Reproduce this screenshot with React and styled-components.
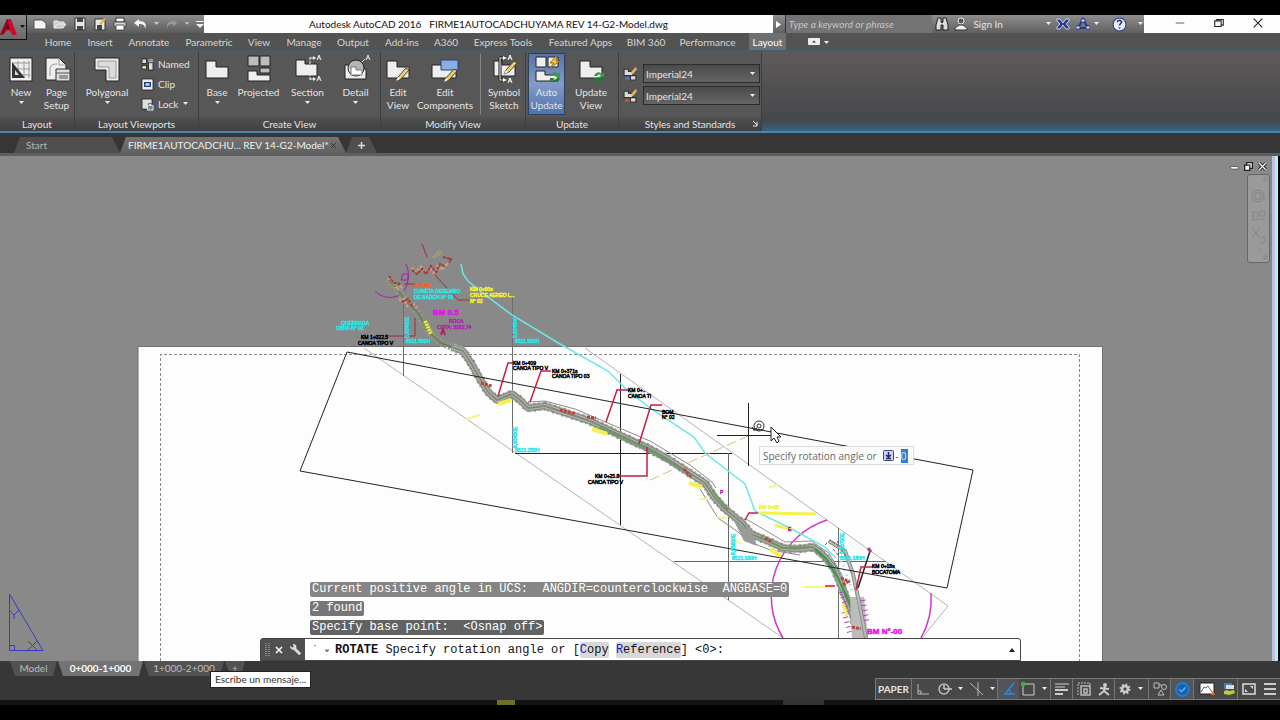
import React from "react";
import styled, { createGlobalStyle } from "styled-components";

const GlobalStyle = createGlobalStyle`
  * {
    box-sizing: border-box;
  }
  body {
    margin: 0;
    background: #000;
    font-family: Lato, "Open Sans", sans-serif;
    font-size: 10px;
    color: #e4e4e4;
  }
  button,
  input,
  select {
    font: inherit;
    color: inherit;
    margin: 0;
    padding: 0;
    border: 0;
    background: none;
  }
`;

const Page = styled.div`
  display: flex;
  flex-direction: column;
  min-height: 100vh;
  padding: 15px 0;
`;

/* ---------- title bar ---------- */

const Header = styled.header`
  display: grid;
  grid-template-columns: 27px 1fr;
  grid-template-rows: 18px 17px;
  background: #535353;
`;

const AppButton = styled.button`
  grid-row: 1 / 3;
  height: 25px;
  display: flex;
  align-items: center;
  justify-content: center;
  gap: 2px;
  background: linear-gradient(#8c8c8c, #6a6a6a);
  border-right: 1px solid #111;
  border-bottom: 1px solid #111;
`;

const TitleBar = styled.div`
  display: flex;
  background: #fdfdfd;
`;

const QuickAccess = styled.div`
  display: flex;
  align-items: center;
  gap: 6px;
  width: 177px;
  padding-left: 6px;
  background: linear-gradient(#8e8e8e, #5c5c5c);
`;

const IconButton = styled.button`
  display: flex;
  align-items: center;
  justify-content: center;
  width: ${(p) => p.$w || 14}px;
  height: 16px;
`;

const Title = styled.div`
  flex: 1;
  display: flex;
  justify-content: center;
  gap: 8px;
  line-height: 18px;
  white-space: pre;
  color: #111;
`;

const InfoCenter = styled.div`
  display: flex;
  align-items: center;
  width: 371px;
  background: linear-gradient(#8e8e8e, #606060);
`;

const SearchInput = styled.input`
  width: 149px;
  height: 18px;
  margin-right: 3px;
  padding-left: 3px;
  font-style: italic;
  background: #737373;
  border-left: 1px solid #333;

  &::placeholder {
    color: #c6c6c6;
    opacity: 1;
  }
`;

const SignIn = styled.button`
  width: 72px;
  text-align: left;
`;

const WindowButtons = styled.div`
  display: flex;
  width: 136px;
  padding: 0 7px 0 21px;
  justify-content: space-between;
  color: #222;
`;

const MenuTabs = styled.nav`
  display: flex;
  align-items: center;
  padding-left: 10px;
`;

const MenuTab = styled.button`
  width: ${(p) => p.$w}px;
  height: 17px;
  margin-left: ${(p) => (p.$active ? 8 : 0)}px;
  line-height: 19px;
  white-space: nowrap;
  color: ${(p) => (p.$active ? "#fff" : "#d6d6d6")};
  background: ${(p) => (p.$active ? "#6d7073" : "none")};
`;

/* ---------- ribbon ---------- */

const Ribbon = styled.div`
  display: flex;
  height: 83px;
  border-top: 2px solid #3f5f72;
  border-bottom: 2px solid #4b86ad;
  background: linear-gradient(#5e5a59, #4c4c4e 65%, #44484c 88%, #356587);
`;

const Panel = styled.section`
  display: flex;
  flex-direction: column;
  width: ${(p) => p.$w}px;
  border-right: 1px solid #3a3f43;
  background: #575757;
`;

const PanelBody = styled.div`
  flex: 1;
  display: flex;
  align-items: flex-start;
  padding: 2px 0 0 ${(p) => p.$left || 1}px;
`;

const PanelTitle = styled.div`
  position: relative;
  height: 14px;
  line-height: 14px;
  text-align: center;
  background: linear-gradient(#515151, #3d3f42);
`;

const Launcher = styled.button`
  position: absolute;
  right: 3px;
  top: 3px;
  display: flex;
`;

const BigButton = styled.button`
  display: flex;
  flex-direction: column;
  align-items: center;
  width: ${(p) => p.$w}px;
  height: 60px;
  line-height: 13px;
  white-space: nowrap;
  background: ${(p) =>
    p.$on ? "linear-gradient(#5575a8, #839bc8 50%, #4f73ad)" : "none"};
  outline: ${(p) => (p.$on ? "1px solid #2f3f5a" : "none")};

  svg {
    flex: none;
    margin-bottom: 1px;
  }
  svg + svg {
    margin-top: 2px;
  }
`;

const Divider = styled.div`
  width: 1px;
  height: 60px;
  margin: 0 3px 0 4px;
  background: #858585;
`;

const SmallList = styled.div`
  display: flex;
  flex-direction: column;
  margin-left: 6px;
`;

const SmallButton = styled.button`
  display: flex;
  align-items: center;
  gap: 4px;
  height: 20px;
`;

const StyleList = styled.div`
  display: flex;
  flex-direction: column;
  gap: 3px;
  padding-top: 10px;
`;

const StyleRow = styled.label`
  display: flex;
  align-items: center;
  gap: 5px;
`;

const SelectBox = styled.span`
  display: flex;
  align-items: center;
  width: 117px;
  height: 19px;
  padding-right: 3px;
  border: 1px solid #2c2c2c;
  background: linear-gradient(#4a4a4a, #656565);

  select {
    flex: 1;
    height: 17px;
    padding-left: 2px;
    appearance: none;
  }
`;

/* ---------- file tabs ---------- */

const FileTabs = styled.div`
  display: flex;
  align-items: flex-end;
  height: 23px;
  padding-left: 14px;
  background: #363636;
  border-bottom: 3px solid #5e5e5e;
`;

const FileTab = styled.button`
  display: flex;
  align-items: center;
  justify-content: space-between;
  width: ${(p) => p.$w}px;
  height: 16px;
  padding: 0 ${(p) => (p.$active ? "9px 0 8px" : "12px")};
  white-space: nowrap;
  color: ${(p) => (p.$active ? "#f0f0f0" : "#b4b4b4")};
  background: ${(p) =>
    p.$active ? "linear-gradient(#757575, #616161)" : "#4f4f4f"};
  clip-path: polygon(6px 0, calc(100% - 8px) 0, 100% 100%, 0 100%);
`;

/* ---------- drawing area ---------- */

const Workspace = styled.main`
  position: relative;
  flex: 1;
  min-height: 505px;
  background: #898989;
  border-right: 2px solid #000;
`;

const EdgeGlow = styled.div`
  position: absolute;
  top: 0;
  right: 0;
  bottom: 0;
  width: 6px;
  background: linear-gradient(90deg, #bfc0dc 50%, #a9f4f2 50%);
`;

const Drawing = styled.svg`
  position: absolute;
  top: 0;
  left: 0;
  width: calc(100% - 6px);
  height: 100%;
`;

const DocButtons = styled.div`
  position: absolute;
  top: 5px;
  right: 9px;
  display: flex;
  gap: 1px;

  button {
    width: 13px;
    height: 11px;
  }
`;

const NavBar = styled.div`
  position: absolute;
  top: 18px;
  right: 8px;
  width: 23px;
  height: 89px;
  border: 1px solid #666;
  border-radius: 3px;
  background: #9a9a9a;
`;

const Prompt = styled.label`
  position: absolute;
  top: 290px;
  left: 759px;
  display: flex;
  align-items: center;
  height: 19px;
  padding: 0 5px 0 3px;
  gap: 2px;
  font-family: "Open Sans", sans-serif;
  color: #6a6a6a;
  background: #fcfcfc;
  border: 1px solid #dcdcdc;

  svg {
    margin-left: 4px;
  }
  input {
    width: 7px;
    height: 14px;
    color: #d8ecff;
    background: #2f7fcc;
  }
`;

const CommandWindow = styled.div`
  position: absolute;
  left: 260px;
  bottom: 0;
  width: 761px;
  font-family: "Liberation Mono", monospace;
  font-size: 12px;
`;

const History = styled.div`
  display: flex;
  flex-direction: column;
  align-items: flex-start;
  gap: 4px;
  padding: 0 0 3px 50px;
`;

const HistoryLine = styled.div`
  height: 15px;
  padding: 0 2px;
  line-height: 15px;
  white-space: pre;
  border-radius: 2px;
  color: #fff;
  background: ${(p) => p.$shade};
`;

const CommandLine = styled.div`
  display: flex;
  align-items: center;
  height: 23px;
  color: #111;
  background: #fff;
  border: 1px solid #444;
  border-radius: 3px 3px 0 0;
`;

const CommandText = styled.div`
  white-space: pre;
`;

const CommandTools = styled.div`
  display: flex;
  align-items: center;
  gap: 4px;
  width: 44px;
  height: 21px;
  margin-right: 8px;
  padding-left: 4px;
  background: #505050;
`;

const Keyword = styled.button`
  display: inline-block;
  height: 16px;
  border-radius: 2px;
  background: #d8d8d8;

  &::first-letter {
    color: #1a13c4;
  }
`;

const Expand = styled.button`
  display: flex;
  margin-left: auto;
  padding-right: 5px;
`;

/* ---------- footer ---------- */

const Footer = styled.footer`
  position: relative;
  display: flex;
  justify-content: space-between;
  height: 39px;
  background: #373737;
`;

const LayoutTabs = styled.div`
  display: flex;
  padding-left: 10px;
  gap: 1px;
`;

const LayoutTab = styled.button`
  width: ${(p) => p.$w}px;
  height: 15px;
  line-height: 15px;
  font-weight: ${(p) => (p.$active ? 700 : 400)};
  color: ${(p) => (p.$active ? "#fff" : "#bdbdbd")};
  background: ${(p) => (p.$active ? "#737373" : "#525252")};
  border-radius: 0 0 4px 4px;
  clip-path: polygon(0 0, 100% 0, calc(100% - 4px) 100%, 5px 100%);
`;

const Tooltip = styled.div`
  position: absolute;
  left: 210px;
  top: 10px;
  height: 17px;
  padding: 0 4px;
  line-height: 15px;
  color: #333;
  background: #fff;
  border: 1px solid #222;
`;

const StatusBar = styled.div`
  align-self: flex-end;
  display: flex;
  height: 22px;
  border: 1px solid #7a7a7a;
  border-right: 0;
  background: #484848;
`;

const StatusCell = styled.button`
  display: flex;
  align-items: center;
  justify-content: center;
  gap: ${(p) => p.$gap || 0}px;
  width: ${(p) => p.$w}px;
  font-weight: 700;
  border-right: ${(p) => (p.$line ? "1px solid #757575" : "0")};
  background: ${(p) => (p.$on ? "#52565c" : "none")};
`;

const Taskbar = styled.div`
  display: flex;
  height: 5px;
  padding-left: 497px;
  gap: 268px;
  background: #141414;
`;

const TaskChip = styled.span`
  width: ${(p) => p.$w}px;
  background: ${(p) => p.$color};
`;

/* ---------- icons ---------- */

const Arrow = ({ fill = "#eee" }) => (
  <svg width="7" height="4" viewBox="0 0 7 4">
    <path d="M1 0h5L3.500 3z" fill={fill} />
  </svg>
);

const Glyph = ({ size = 14, children }) => (
  <svg width={size} height={size} viewBox="0 0 14 14" fill="none">
    {children}
  </svg>
);

const Big = ({ children }) => (
  <svg width="30" height="31" viewBox="0 0 30 31" fill="none">
    {children}
  </svg>
);

const base = "M4 7h10v6h12v11H4z";
const block = { fill: "#eee", stroke: "#222" };

const Pencil = ({ x = 0, y = 0 }) => (
  <g transform={`translate(${x} ${y})`}>
    <path d="M14 25l2-4 8-9 3 2-8 9z" fill="#e7cf72" stroke="#4c4330" />
    <path d="M14 25l2-4 2 2z" fill="#fff" />
  </g>
);

const Refresh = ({ x, y }) => (
  <g transform={`translate(${x} ${y})`}>
    <path d="M1 5a4.500 4.500 0 0 1 8-2l2-2v5H6l2-2a3 3 0 0 0-4 1z" fill="#3b9a45" />
    <path d="M11 7a4.500 4.500 0 0 1-8 2l-2 2V7h5L4 8a3 3 0 0 0 4-1z" fill="#237a30" />
  </g>
);

const NewIcon = () => (
  <Big>
    <rect x="4" y="4" width="22" height="23" {...block} />
    <path d="M12 7v17M18 7v17M23 7v17M7 9h17M7 15h17M7 21h17" stroke="#999" />
    <path d="M6 8l13 16H6z" fill="#333" />
    <path d="M9 16l4 5H9z" fill="#ddd" />
  </Big>
);

const PageSetupIcon = () => (
  <Big>
    <path d="M4 4h13l7 7v15H4z" {...block} />
    <path d="M17 4v7h7M8 16c0-5 3-6 7-6M8 16v6" stroke="#999" />
    <path d="M14 15h14v12H14z" fill="#ddd" stroke="#333" />
    <path d="M14 19h14M17 22h9M17 24h9" stroke="#555" />
  </Big>
);

const PolygonalIcon = () => (
  <Big>
    <path d="M3 4h24v23H14V16H3z" {...block} />
    <path d="M6 7h18v17h-7V13H6z" fill="#dcdcdc" stroke="#999" />
  </Big>
);

const BaseIcon = () => (
  <Big>
    <path d={base} {...block} />
  </Big>
);

const ProjectedIcon = () => (
  <Big>
    <path d="M4 2h11v10H4zM16 2h10v10H16zM16 14h10v5H16z" fill="#bdbdbd" stroke="#222" />
    <path d="M4 17h9v4h13v6H4z" {...block} />
  </Big>
);

const SectionIcon = () => (
  <Big>
    <path d="M3 6h9v4h12v12H3z" {...block} />
    <path d="M17 3v23M17 4h4M17 25h4" stroke="#eee" strokeDasharray="3 1" />
    <path d="M20 2l3 2-3 2zM20 23l3 2-3 2z" fill="#eee" />
    <path d="M24 6l2-5 2 5M25 4h2M24 27l2-5 2 5M25 25h2" stroke="#eee" />
  </Big>
);

const DetailIcon = () => (
  <Big>
    <path d="M4 11h5v4h16v10H4z" {...block} />
    <circle cx="15" cy="14" r="8" fill="#ddd" fillOpacity=".7" stroke="#222" />
    <path d="M10 13h5v3h6v5H10z" fill="#fff" stroke="#777" />
    <path d="M21 8l3-3M25 6l2-5 2 5M26 4h2" stroke="#ddd" />
  </Big>
);

const EditViewIcon = () => (
  <Big>
    <path d={base} {...block} />
    <Pencil x={-1} y={2} />
  </Big>
);

const EditComponentsIcon = () => (
  <Big>
    <path d="M2 11h10v4h14v9H2z" {...block} />
    <path d="M11 6h17v10H11z" fill="#88aee4" stroke="#25467c" />
    <Pencil x={0} y={3} />
  </Big>
);

const SketchIcon = () => (
  <Big>
    <path d="M5 7h8v4h13v11H5z" {...block} />
    <path d="M11 4v22M11 4h6M11 26h6" stroke="#111" strokeWidth="3" />
    <path d="M11 4v22M11 4h4M11 26h4" stroke="#fff" />
    <path d="M14 2l4 2-4 2zM14 24l4 2-4 2z" fill="#fff" />
    <path d="M19 6l2-5 2 5M20 4h2M19 29l2-5 2 5M20 27h2" stroke="#fff" />
    <Pencil y={-5} x={1} />
  </Big>
);

const AutoUpdateIcon = () => (
  <Big>
    <path d="M4 3h10v10H4zM16 3h10v10H16z" {...block} />
    <path d="M4 17h9v4h13v6H4z" {...block} />
    <path d="M25 1l-7 8h4l-5 6 11-8h-4z" fill="#f4c742" stroke="#8c6a18" />
    <Refresh x={17} y={17} />
  </Big>
);

const UpdateViewIcon = () => (
  <Big>
    <path d={base} {...block} />
    <Refresh x={17} y={17} />
  </Big>
);

const quickIcons = [
  ["New", <path d="M1 3h8l4 3v6H1z" fill="#f4f4f4" stroke="#555" />],
  [
    "Open",
    <path d="M1 11V4h4l1 1h5v2M1 11l3-4h9l-3 4z" fill="#ccc" stroke="#eee" />,
  ],
  [
    "Save",
    <g>
      <path d="M2 1h10v12H2z" fill="#e8e8e8" stroke="#333" />
      <path d="M4 1h6v4H4zM4 9h6v4H4z" fill="#444" />
    </g>,
  ],
  [
    "Save As",
    <g>
      <path d="M2 2h10v11H2z" fill="#e8e8e8" stroke="#333" />
      <path d="M4 8h5v5H4z" fill="#444" />
      <path d="M6 7l5-6 2 1-5 6z" fill="#e3b44a" />
    </g>,
  ],
  [
    "Plot",
    <g>
      <path d="M3 1h8v4H3z" fill="#fff" stroke="#333" />
      <path d="M1 5h12v5H1z" fill="#d5d5d5" stroke="#444" />
      <path d="M3 8h8v5H3z" fill="#fff" stroke="#555" />
    </g>,
  ],
  [
    "Undo",
    <path d="M6 2L1 6l5 4V7c4 0 6 1 6 5 2-5 0-8-6-8z" fill="#f4f4f4" />,
  ],
];

const menuTabs = [
  ["Home", 42],
  ["Insert", 42],
  ["Annotate", 56],
  ["Parametric", 64],
  ["View", 36],
  ["Manage", 54],
  ["Output", 44],
  ["Add-ins", 54],
  ["A360", 34],
  ["Express Tools", 80],
  ["Featured Apps", 75],
  ["BIM 360", 56],
  ["Performance", 67],
];

const road =
  "M452 347L463 351L471 363L480 379L488 392L497 400L512 394L520 400L528 408L545 406L560 411L590 421L630 440L648 448L668 459L688 472L705 483L714 497L725 509L742 523L751 534L768 541L783 548Q800 550 812 547Q822 551 835 570L843 590L853 615L858 638";
const upperRoad = "M388 279L398 290L405 300L418 313L429 332L441 343L454 348";
const sideRoad = "M829 541L845 551L853 574L859 602L866 638";
const cyanRiver =
  "M461 264L463 274L468 281L480 291L512 315L560 344L608 371L627 390L650 408L694 437L705 453L745 484L755 511L790 528L825 547L836 558";

const Label = ({ x, y, fill = "#000", size = 5, rotate, children }) => (
  <text
    x={x}
    y={y}
    fill={fill}
    stroke={fill}
    strokeWidth=".5"
    fontSize={size}
    fontFamily="Liberation Sans, sans-serif"
    fontWeight={size > 5 ? 700 : 400}
    transform={rotate ? `rotate(${rotate} ${x} ${y})` : undefined}
  >
    {children}
  </text>
);

const CYAN = "#27e5e9";
const YELLOW = "#f3f32b";
const MAGENTA = "#e312e3";

const PlanDrawing = () => (
  <Drawing viewBox="0 156 1272 505" preserveAspectRatio="xMidYMid slice" fill="none">
    {/* sheet and printable area */}
    <path d="M138 661V346.500H1102.500V661" fill="#fdfdfd" stroke="#707070" />
    <path d="M160.500 661V354.500H1079.500V661" stroke="#888" strokeDasharray="3 2" />

    {/* viewport edges */}
    <path d="M364 348L783 638M585 348L948 606L922 638" stroke="#b4b4b4" />
    <path d="M403.500 300V376M512.500 297V453M838.500 528V638" stroke="#6d6d6d" />
    <path d="M620.500 374V525M515 453.500H732" stroke="#222" />
    <path d="M728.500 453V600M674 561.500H886" stroke="#666" />

    {/* benchmark circles */}
    <path d="M827 520A80 80 0 0 0 783 638M931 593A80 80 0 0 1 921 638" stroke="#cf35cf" strokeWidth="1.500" />
    <path d="M375 291C382 298 390 299 401 295M406 264C410 272 409 283 404 291M403 274H408V280H401Z" stroke="#a323a3" />

    <path d={cyanRiver} stroke="#6fe6e8" strokeWidth="1.500" />
    <path d="M650 480L748 436" stroke="#dcc07a" strokeDasharray="10 4" />

    {/* road corridor */}
    <path d={upperRoad} stroke="#9a9a80" strokeWidth="7" strokeDasharray="2 2" />
    <path d={upperRoad} stroke="#7f8a74" strokeWidth="3" />
    <path d={upperRoad} stroke="#557e4a" />
    <g strokeLinejoin="round">
      <path d={road} stroke="#b2b2ae" strokeWidth="8" />
      <path d={road} stroke="#8f8f8c" strokeWidth="9" strokeDasharray="1 4 2 3" />
      <path d={road} stroke="#838380" strokeWidth="6" />
      <path d={road} stroke="#b9b9b4" strokeWidth="4" />
      <path d={road} stroke="#7c8c76" strokeWidth="2" />
    </g>
    <path d="M528 402L545 401L575 409L650 441L690 465L712 482L716 488M700 489L718 518L738 532L748 541L770 550L800 555" stroke="#8a8a88" />
    <path d="M600 427L648 449L690 474M712 490L728 510M760 537L783 548L812 547" stroke="#6a9a62" strokeWidth="2" />
    <path d="M734 517L748 520L785 542L811 541L829 553L842 575L850 600" stroke="#939393" />
    <path d="M815 549L826 559L838 578L852 608" stroke="#3a9a3d" strokeWidth="2" />
    <path d="M850 597L864 597L868 638H852Z" fill="#bcbcb8" />
    <path d={sideRoad} stroke="#8c8c8a" strokeWidth="4" />
    <path d={sideRoad} stroke="#bbb" strokeWidth="2" />
    <path d="M734 521L744 541L757 546L752 532Z" fill="#9a9a98" />
    <path d="M870 551L858 588" stroke="#222" strokeWidth="1.500" />
    <path d="M868 548L871 552" stroke="#9b4b8b" strokeWidth="3" />

    <path d="M347 352L973 470L947 588L300 471Z" stroke="#222" />

    {/* contour scraps around the road */}
    <path d="M412 268L416 272L421 267L425 273L430 268L434 273L438 266L442 270L446 263L449 266M388 278L393 281L397 290L402 286M399 300L404 299L407 306L413 303L417 308" stroke="#c9a08c" strokeWidth="3" strokeDasharray="2 2" />
    <path d="M412 270L417 274L422 269L426 274L431 266L436 272L440 264L445 266M443 257L451 259L449 263M389 276L394 283L401 284M402 302L408 299L413 307" stroke="#a13a32" strokeWidth="2" strokeDasharray="3 1" />
    <path d="M433 258L440 250M435 256L442 253" stroke="#a59d74" strokeWidth="3" strokeDasharray="2 1" />
    <path d="M481 383L492 386M560 410L575 414M587 417L596 418M684 469L691 477M765 538L772 542M841 578L850 582M852 627L861 629M843 585L849 581" stroke="#b8453a" strokeWidth="3" strokeDasharray="3 1" />
    <path d="M841 592L848 612M863 600L867 622M844 612L850 634" stroke="#c03bc0" strokeWidth="5" strokeDasharray="1 4" />
    <path d="M840 556L852 590M856 600L860 634" stroke="#9fd0d0" strokeWidth="3" strokeDasharray="1 4" />
    <path d="M825 545L830 540L843 549M837 541L848 560M833 549L838 555L842 551" stroke="#6b5555" strokeDasharray="3 2" />

    {/* yellow survey marks */}
    <g stroke="#f2f250" strokeWidth="4">
      <path d="M498 404L511 400M592 429L607 434M689 483L702 487M770 549L781 556" />
      <path d="M466 419L480 415M699 499L708 499M717 517L727 518M735 540L742 544M769 487L778 485M804 587L833 587" stroke="#f6f680" strokeWidth="2" />
      <path d="M759 513L816 514M775 525L792 530M843 604L847 616" strokeWidth="3" />
    </g>
    <path d="M425 321L431 334" stroke={YELLOW} strokeWidth="4" strokeDasharray="2 1" />

    {/* leaders */}
    <g stroke="#c91c43">
      <path d="M422 244L427 257M404 284H414M434 274L458 300H470M387 336H415V318" stroke="#a02a3c" />
      <path d="M498 396L508 363H514M530 402L541 371H551M606 422L617 390H628" strokeWidth="1.500" />
      <path d="M639 444L651 405H662M647 447V476H619M745 520L749 513H758" strokeWidth="1.500" />
      <path d="M856 590L861 567H873M825 586H835" strokeWidth="1.500" />
    </g>

    <Label x={414} y={287} fill="#ee6128">0+409s</Label>
    <Label x={414} y={293} fill={CYAN}>CUNETA DESEMBO</Label>
    <Label x={414} y={299} fill={CYAN}>DE BADEN N° 01</Label>
    <Label x={470} y={291} fill={YELLOW}>KM 0+60s</Label>
    <Label x={470} y={297} fill={YELLOW}>CRUCE AEREO L...</Label>
    <Label x={470} y={303} fill={YELLOW}>N° 02</Label>
    <Label x={433} y={315} fill={MAGENTA} size={8}>BM 0.5</Label>
    <Label x={449} y={323} fill="#b426b4">ROCA</Label>
    <Label x={437} y={329} fill="#b426b4">COTA: 3282.74</Label>
    <Label x={341} y={325} fill={CYAN}>QUEBRADA</Label>
    <Label x={336} y={330} fill={CYAN}>OBRA N° 02</Label>
    <Label x={361} y={339}>KM 1+022.5</Label>
    <Label x={358} y={345}>CANOA TIPO V</Label>
    <Label x={406} y={343} fill={CYAN}>8521.580H</Label>
    <Label x={409} y={338} fill={CYAN} rotate={-90}>6,83400E</Label>
    <Label x={515} y={343} fill={CYAN}>8521.580H</Label>
    <Label x={517} y={338} fill={CYAN} rotate={-90}>6,83450E</Label>
    <Label x={515} y={452} fill={CYAN}>8521.250H</Label>
    <Label x={517} y={448} fill={CYAN} rotate={-90}>6,83450E</Label>
    <Label x={732} y={560} fill={CYAN}>8521.180H</Label>
    <Label x={735} y={555} fill={CYAN} rotate={-90}>6,83600E</Label>
    <Label x={840} y={560} fill={CYAN}>8521.180H</Label>
    <Label x={844} y={554} fill={CYAN} rotate={-90}>6,83700E</Label>
    <Label x={513} y={365}>KM 0+409</Label>
    <Label x={513} y={370}>CANOA TIPO V</Label>
    <Label x={552} y={373}>KM 0+371s</Label>
    <Label x={552} y={378}>CANOA TIPO 03</Label>
    <Label x={628} y={392}>KM 0+..</Label>
    <Label x={628} y={398}>CANOA TI</Label>
    <Label x={662} y={414}>BOM.</Label>
    <Label x={662} y={419}>N° 02</Label>
    <Label x={595} y={478}>KM 0+25.8</Label>
    <Label x={588} y={484}>CANOA TIPO V</Label>
    <Label x={720} y={494} fill="#c028c0">P</Label>
    <Label x={788} y={531} fill="#9b28c0">E</Label>
    <Label x={759} y={509} fill={YELLOW}>KM 0+60</Label>
    <Label x={872} y={568}>KM 0+18s</Label>
    <Label x={872} y={574}>BOCATOMA</Label>
    <Label x={867} y={634} fill={MAGENTA} size={8}>BM N°-00</Label>
    <path d="M441 335L443 329L445 335M442 332H445" stroke="#a32b4b" strokeWidth="2" />

    {/* rotate cursor */}
    <path d="M717 435.500H778M748.500 403V466" stroke="#222" />
    <circle cx="759" cy="426" r="5" stroke="#333" />
    <circle cx="759" cy="426" r="2" stroke="#333" />
    <path d="M753 430H764M752 427L754 430L757 428" stroke="#333" />
    <path d="M771 427V441L774 438L777 443L779 441L777 437H781Z" fill="#fff" stroke="#222" />

    {/* UCS icon */}
    <g stroke="#3b39c0">
      <path d="M9.500 594V650.500H43ZM9.500 645.500H14.500V650" />
      <path d="M10 611L14 615L19 610M14 615V619M28 641L37 650M37 641L28 650" />
    </g>
  </Drawing>
);

const Console = () => (
  <CommandWindow>
    <History>
      <HistoryLine $shade="#858585">
        {"Current positive angle in UCS:  ANGDIR=counterclockwise  ANGBASE=0"}
      </HistoryLine>
      <HistoryLine $shade="#767676">2 found</HistoryLine>
      <HistoryLine $shade="#626262">{"Specify base point:  <Osnap off>"}</HistoryLine>
    </History>
    <CommandLine>
      <CommandTools>
        <svg width="5" height="14" viewBox="0 0 5 14">
          <path d="M1 0v14M4 0v14" stroke="#bbb" strokeDasharray="1 1" />
        </svg>
        <IconButton $w={10} aria-label="Close">
          <svg width="8" height="8" viewBox="0 0 8 8">
            <path d="M1 1l6 6M7 1L1 7" stroke="#fff" strokeWidth="1.500" />
          </svg>
        </IconButton>
        <IconButton $w={14} aria-label="Customize">
          <Glyph size={13}>
            <path d="M5 5l7 7" stroke="#ddd" strokeWidth="3" />
            <path d="M1 3l3 2 1-1-1-3c4 0 5 3 3 6-3 1-6 0-6-4z" fill="#ddd" />
          </Glyph>
        </IconButton>
      </CommandTools>
      <svg width="22" height="12" viewBox="0 0 22 12">
        <path d="M1 2l2-1M12 6h4l-2 2z" fill="#666" stroke="#888" />
      </svg>
      <CommandText>
        <b>ROTATE</b>
        {" Specify rotation angle or ["}
        <Keyword>Copy</Keyword>
        {" "}
        <Keyword>Reference</Keyword>
        {"] <0>:"}
      </CommandText>
      <Expand aria-label="History">
        <svg width="6" height="4" viewBox="0 0 6 4">
          <path d="M0 4h6L3 0z" fill="#222" />
        </svg>
      </Expand>
    </CommandLine>
  </CommandWindow>
);

const Status = () => (
  <StatusBar>
    <StatusCell $w={36} $line>PAPER</StatusCell>
    <StatusCell $w={22} aria-label="Snap">
      <Glyph><path d="M2 2v10h11M5 12V9H2" stroke="#bbb" /></Glyph>
    </StatusCell>
    <StatusCell $w={34} $gap={5} aria-label="Polar">
      <Glyph><circle cx="6" cy="7" r="5" stroke="#bbb" strokeWidth="1.500" /><path d="M6 7h8M6 7V3" stroke="#ccc" strokeWidth="1.500" /></Glyph>
      <Arrow />
    </StatusCell>
    <StatusCell $w={30} $gap={5} $line aria-label="Isodraft">
      <Glyph><path d="M0 1l13 12M8 0v14" stroke="#bbb" /></Glyph>
      <Arrow />
    </StatusCell>
    <StatusCell $w={21} $on aria-label="Tracking">
      <Glyph><path d="M12 1L3 12h10M7 7l2 5" stroke="#2f86e0" strokeWidth="1.500" /></Glyph>
    </StatusCell>
    <StatusCell $w={32} $gap={6} $line aria-label="Object snap">
      <Glyph><path d="M2 2h11v11H2z" stroke="#ccc" /><path d="M0 0h4v4H0z" fill="#2fb54a" /></Glyph>
      <Arrow />
    </StatusCell>
    <StatusCell $w={22} $line aria-label="Lineweight">
      <Glyph><path d="M0 2h14M0 5h10" stroke="#ccc" /><path d="M0 8h13M0 12h8" stroke="#ccc" strokeWidth="2" /></Glyph>
    </StatusCell>
    <StatusCell $w={21} aria-label="Cycling">
      <Glyph><path d="M1 13V1h12v2" stroke="#bbb" strokeDasharray="2 1" /><path d="M4 4h9v9H4zM7 7h3v4H7z" stroke="#bbb" strokeWidth="1.500" /></Glyph>
    </StatusCell>
    <StatusCell $w={21} $line aria-label="Annotation">
      <Glyph><circle cx="8" cy="3" r="2" fill="#ccc" /><path d="M8 4l-1 5-5 4M7 9l5 4M3 6l9 1" stroke="#ccc" strokeWidth="2" /></Glyph>
    </StatusCell>
    <StatusCell $w={34} $gap={6} $line aria-label="Workspace">
      <Glyph size={12}>
        <circle cx="7" cy="7" r="3.500" stroke="#ccc" strokeWidth="3" />
        <circle cx="7" cy="7" r="5.500" stroke="#ccc" strokeWidth="2" strokeDasharray="2 2.300" />
      </Glyph>
      <Arrow />
    </StatusCell>
    <StatusCell $w={22} $line aria-label="Isolate">
      <Glyph><path d="M1 1h5v5H1zM5 13l3-5 3 5z" stroke="#bbb" /><circle cx="11" cy="5" r="2.500" stroke="#bbb" /><path d="M6 3h3" stroke="#bbb" /></Glyph>
    </StatusCell>
    <StatusCell $w={23} $on $line aria-label="Graphics performance">
      <Glyph size={15}><circle cx="7" cy="7" r="6" fill="#1660ac" stroke="#1f7ad0" strokeWidth="2" /><path d="M4 7l2 2 4-4" stroke="#5fa4e8" strokeWidth="1.500" /></Glyph>
    </StatusCell>
    <StatusCell $w={26} aria-label="Monitor">
      <svg width="17" height="14" viewBox="0 0 17 14">
        <path d="M1 1h14v11H1z" fill="#fff" stroke="#222" />
        <path d="M2 10l3-5 2 1 2-2 4 6" fill="none" stroke="#667" />
        <path d="M14 8l2 5h-4z" fill="#e4702a" />
      </svg>
    </StatusCell>
    <StatusCell $w={18} $line aria-label="Trusted">
      <Glyph><path d="M2 1h8v6H2z" fill="#3f7fc0" /><path d="M4 3h8v4H4z" fill="#ddd" /><path d="M2 9l3-1 2 1 5-1 1 3-6 2-5-1z" fill="#b8cf3a" /></Glyph>
    </StatusCell>
    <StatusCell $w={22} aria-label="Clean screen">
      <Glyph><path d="M1 2h12v10H1z" stroke="#ddd" strokeWidth="1.500" /><path d="M8 4h3v3zM3 7v3h3z" fill="#ddd" /></Glyph>
    </StatusCell>
    <StatusCell $w={20} aria-label="Menu">
      <Glyph><path d="M1 2h12M1 7h12M1 12h12" stroke="#ccc" strokeWidth="2" /></Glyph>
    </StatusCell>
  </StatusBar>
);

const StyleSelect = ({ label, color }) => (
  <StyleRow>
    <Glyph size={15}>
      <path d="M1 3h4v2h4v4H1zM7 9h5v4H7z" fill="#ddd" stroke="#333" />
      <path d="M7 6l5-5 1 2-4 5z" fill="#e2b75a" />
      <path d="M2 10h4v3H2z" fill={color} />
    </Glyph>
    <SelectBox>
      <select aria-label={label}>
        <option>Imperial24</option>
      </select>
      <Arrow />
    </SelectBox>
  </StyleRow>
);

const App = () => {
  return (
    <Page>
      <GlobalStyle />
      <Header>
        <AppButton aria-label="Application menu">
          <svg width="17" height="18" viewBox="0 0 17 18">
            <path d="M7 1h4l6 16h-5l-2-4H6l-2 3-4 1z" fill="#c8102e" />
            <path d="M7 1L0 17l4-1 5-10z" fill="#8f0a1f" />
            <path d="M8 6l2 5H6z" fill="#5c0713" />
          </svg>
          <Arrow fill="#111" />
        </AppButton>
        <TitleBar>
          <QuickAccess>
            {quickIcons.map(([name, icon]) => (
              <IconButton key={name} aria-label={name}>
                <Glyph>{icon}</Glyph>
              </IconButton>
            ))}
            <IconButton $w={7} aria-label="Undo list"><Arrow fill="#ccc" /></IconButton>
            <IconButton $w={12} aria-label="Redo">
              <Glyph size={12}>
                <path d="M8 2l5 4-5 4V7c-4 0-6 1-6 5C0 7 2 4 8 4z" fill="#999" />
              </Glyph>
            </IconButton>
            <IconButton $w={6} aria-label="Redo list"><Arrow fill="#ccc" /></IconButton>
            <IconButton $w={8} aria-label="Customize">
              <svg width="8" height="7" viewBox="0 0 8 7">
                <path d="M0 0h8v1H0zM0 3h8L4 7z" fill="#eee" />
              </svg>
            </IconButton>
          </QuickAccess>
          <Title>
            <span>Autodesk AutoCAD 2016</span>
            <span>FIRME1AUTOCADCHUYAMA REV 14-G2-Model.dwg</span>
          </Title>
          <InfoCenter>
            <IconButton $w={12} aria-label="Expand">
              <svg width="5" height="7" viewBox="0 0 5 7"><path d="M0 0l5 3.500L0 7z" fill="#fff" /></svg>
            </IconButton>
            <SearchInput aria-label="Search" placeholder="Type a keyword or phrase" />
            <IconButton $w={14} aria-label="Find">
              <Glyph>
                <path d="M3 1h3v4l1 1 1-1V1h3l2 7v5H8V8H6v5H1V8z" fill="#ddd" stroke="#222" />
              </Glyph>
            </IconButton>
            <IconButton $w={25} aria-label="Account">
              <Glyph>
                <circle cx="7" cy="4" r="3" stroke="#eee" fill="#555" />
                <path d="M1 13c0-4 3-3 4-5h4c1 2 4 1 4 5z" fill="#eee" stroke="#333" />
              </Glyph>
            </IconButton>
            <SignIn>Sign In</SignIn>
            <IconButton $w={8} aria-label="Account menu"><Arrow /></IconButton>
            <IconButton $w={22} aria-label="Exchange">
              <Glyph>
                <path d="M1 2h3l3 4 3-4h3v2l-3 3 3 3v2h-3L7 8l-3 4H1v-2l3-3-3-3z" fill="#263c8f" stroke="#c4d0f4" />
              </Glyph>
            </IconButton>
            <IconButton $w={18} aria-label="A360">
              <Glyph>
                <path d="M7 2l5 9H2z" stroke="#263c8f" strokeWidth="2" />
                <path d="M5 2h4v3H5zM0 9h4v3H0zM10 9h4v3h-4z" fill="#dce3ff" stroke="#263c8f" />
              </Glyph>
            </IconButton>
            <IconButton $w={10} aria-label="A360 menu"><Arrow /></IconButton>
            <IconButton $w={36} aria-label="Help">
              <Glyph size={15}>
                <circle cx="7" cy="7" r="6" fill="#eef" stroke="#26407c" />
                <path d="M5 5c0-3 4-2 4 0 0 1-2 1-2 3M7 9.500v1.500" stroke="#26407c" strokeWidth="1.500" />
              </Glyph>
            </IconButton>
            <Arrow />
          </InfoCenter>
          <WindowButtons>
            <IconButton $w={30} aria-label="Minimize"><Glyph size={10}><path d="M1 7h12" stroke="#222" /></Glyph></IconButton>
            <IconButton $w={30} aria-label="Restore">
              <Glyph size={10}><path d="M1 4h9v8H1zM4 4V2h9v8h-3" stroke="#222" strokeWidth="1.500" /></Glyph>
            </IconButton>
            <IconButton $w={30} aria-label="Close"><Glyph size={10}><path d="M1 1l12 12M13 1L1 13" stroke="#222" strokeWidth="1.500" /></Glyph></IconButton>
          </WindowButtons>
        </TitleBar>
        <MenuTabs>
          {menuTabs.map(([name, w]) => (
            <MenuTab key={name} $w={w}>{name}</MenuTab>
          ))}
          <MenuTab $w={37} $active>Layout</MenuTab>
          <IconButton $w={66} aria-label="Ribbon display">
            <svg width="22" height="8" viewBox="0 0 22 8">
              <rect width="12" height="7" rx="1" fill="#eee" />
              <path d="M4 4.500h4l-2-2z" fill="#333" />
              <path d="M16 3h5l-2.500 3z" fill="#eee" />
            </svg>
          </IconButton>
        </MenuTabs>
      </Header>

      <Ribbon>
        <Panel $w={75}>
          <PanelBody $left={2}>
            <BigButton $w={38}><NewIcon />New<Arrow /></BigButton>
            <BigButton $w={33}><PageSetupIcon />Page<br />Setup</BigButton>
          </PanelBody>
          <PanelTitle>Layout</PanelTitle>
        </Panel>
        <Panel $w={124}>
          <PanelBody $left={4}>
            <BigButton $w={56}><PolygonalIcon />Polygonal<Arrow /></BigButton>
            <SmallList>
              <SmallButton>
                <Glyph size={13}><path d="M1 1h5v5H1zM1 8h5v4H1zM8 5h5v8H8z" fill="#ddd" stroke="#222" /><path d="M8 2h5M8 4h5" stroke="#ddd" /></Glyph>
                Named
              </SmallButton>
              <SmallButton>
                <Glyph size={13}><path d="M1 1h12v12H1z" fill="#eee" stroke="#222" /><path d="M4 5h6v4H4z" fill="#c7d6f3" stroke="#26407c" strokeWidth="1.500" /></Glyph>
                Clip
              </SmallButton>
              <SmallButton>
                <Glyph size={13}><path d="M1 1h11v11H1z" fill="#ddd" stroke="#222" /><path d="M7 8h6v5H7z" fill="#789" stroke="#eee" /><path d="M8 8V6h4v2" stroke="#567" /></Glyph>
                Lock
                <Arrow />
              </SmallButton>
            </SmallList>
          </PanelBody>
          <PanelTitle>Layout Viewports</PanelTitle>
        </Panel>
        <Panel $w={182}>
          <PanelBody>
            <BigButton $w={34}><BaseIcon />Base<Arrow /></BigButton>
            <BigButton $w={49}><ProjectedIcon /><span>Projected</span></BigButton>
            <BigButton $w={49}><SectionIcon />Section<Arrow /></BigButton>
            <BigButton $w={47}><DetailIcon />Detail<Arrow /></BigButton>
          </PanelBody>
          <PanelTitle>Create View</PanelTitle>
        </Panel>
        <Panel $w={145}>
          <PanelBody>
            <BigButton $w={32}><EditViewIcon />Edit<br />View</BigButton>
            <BigButton $w={62}><EditComponentsIcon />Edit<br />Components</BigButton>
            <Divider />
            <BigButton $w={40}><SketchIcon />Symbol<br />Sketch</BigButton>
          </PanelBody>
          <PanelTitle>Modify View</PanelTitle>
        </Panel>
        <Panel $w={93}>
          <PanelBody $left={3}>
            <BigButton $w={35} $on><AutoUpdateIcon />Auto<br />Update</BigButton>
            <BigButton $w={54}><UpdateViewIcon />Update<br />View</BigButton>
          </PanelBody>
          <PanelTitle>Update</PanelTitle>
        </Panel>
        <Panel $w={143}>
          <PanelBody $left={4}>
            <StyleList>
              <StyleSelect label="Section view style" color="#4a74c9" />
              <StyleSelect label="Detail view style" color="#c24f3a" />
            </StyleList>
          </PanelBody>
          <PanelTitle>
            Styles and Standards
            <Launcher aria-label="Style settings">
              <svg width="6" height="7" viewBox="0 0 6 7"><path d="M1 1l4 4M5 2v4H1" fill="none" stroke="#eee" /></svg>
            </Launcher>
          </PanelTitle>
        </Panel>
      </Ribbon>

      <FileTabs>
        <FileTab $w={106}>Start</FileTab>
        <FileTab $w={226} $active>
          FIRME1AUTOCADCHU... REV 14-G2-Model*
          <svg width="7" height="7" viewBox="0 0 7 7"><path d="M1 1l5 5M6 1L1 6" stroke="#333" /></svg>
        </FileTab>
        <FileTab $w={31} aria-label="New tab">
          <svg width="7" height="7" viewBox="0 0 7 7"><path d="M3.500 0v7M0 3.500h7" stroke="#ddd" strokeWidth="1.500" /></svg>
        </FileTab>
      </FileTabs>

      <Workspace>
        <PlanDrawing />
        <EdgeGlow />
        <DocButtons>
          <button aria-label="Minimize drawing"><Glyph size={9}><path d="M1 7h12v4H1z" fill="#fff" stroke="#333" /></Glyph></button>
          <button aria-label="Restore drawing"><Glyph size={9}><path d="M1 5h8v8H1zM4 4V1h9v9h-3" fill="#fff" stroke="#222" strokeWidth="2" /></Glyph></button>
          <button aria-label="Close drawing">
            <Glyph size={9}><path d="M2 2l10 10M12 2L2 12" stroke="#222" strokeWidth="5" /><path d="M2 2l10 10M12 2L2 12" stroke="#fff" strokeWidth="2" /></Glyph>
          </button>
        </DocButtons>
        <NavBar>
          <svg width="21" height="87" viewBox="0 0 21 87" fill="none" stroke="#848484">
            <path d="M16 3h3v3h-3z" />
            <circle cx="10" cy="21" r="6" />
            <path d="M7 18h6v6H7zM15 23l3 3M5 37h5v8H5zM12 36h5v5h-5zM12 44h5M4 53l8 10M12 53L4 63M14 62h3v4l-4 3M12 73l2 2" />
            <path d="M16 81h3v3h-3z" />
          </svg>
        </NavBar>
        <Prompt>
          Specify rotation angle or
          <svg width="11" height="11" viewBox="0 0 11 11" fill="none">
            <rect x=".5" y=".5" width="10" height="10" rx="1" fill="#cfd3ea" stroke="#3d4587" />
            <path d="M5.500 2v4M3 5l2.500 2L8 5M3 8.500h5" stroke="#20286c" strokeWidth="1.500" />
          </svg>
          -
          <input aria-label="Rotation angle" defaultValue="0" />
        </Prompt>
        <Console />
      </Workspace>

      <Footer>
        <LayoutTabs>
          <LayoutTab $w={47}>Model</LayoutTab>
          <LayoutTab $w={85} $active>0+000-1+000</LayoutTab>
          <LayoutTab $w={80}>1+000-2+000</LayoutTab>
          <LayoutTab $w={20}>+</LayoutTab>
        </LayoutTabs>
        <Tooltip role="tooltip">Escribe un mensaje...</Tooltip>
        <Status />
      </Footer>
      <Taskbar>
        <TaskChip $w={18} $color="#6f6f2c" />
        <TaskChip $w={41} $color="#333" />
      </Taskbar>
    </Page>
  );
};

export default App;
